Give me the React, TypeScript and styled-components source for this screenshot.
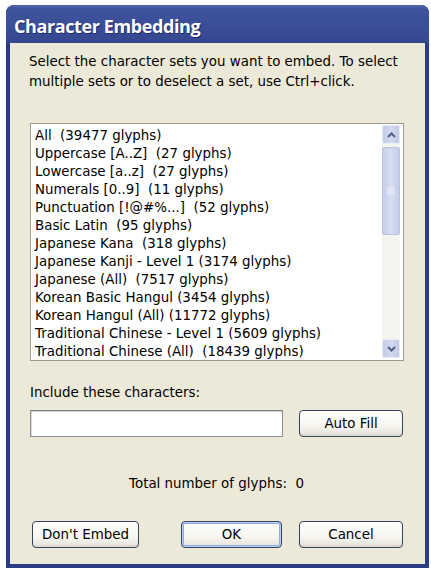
import React from "react";
import styled, { createGlobalStyle } from "styled-components";

const Global = createGlobalStyle`
  html, body { margin: 0; padding: 0; background: #ffffff; }
  * { box-sizing: border-box; }
`;

const FONT = `"DejaVu Sans", "Liberation Sans", sans-serif`;

const Window = styled.div`
  margin: 5px 0 0 6px;
  width: 423px;
  height: 563px;
  border-radius: 8px 8px 0 0;
  background: #2c3c84;
  padding: 0 4px 4px 4px;
  display: flex;
  flex-direction: column;
`;

const TitleBar = styled.div`
  height: 38px;
  margin: 0 -4px;
  border-radius: 8px 8px 0 0;
  background: linear-gradient(#5466ac 0px, #3f529c 4px, #3a4d97 60%, #34468e 100%);
  display: flex;
  align-items: center;
  padding-left: 8px;
  padding-top: 3px;
  color: #ffffff;
  font-family: "Open Sans", "DejaVu Sans", sans-serif;
  font-weight: 700;
  font-size: 18px;
  letter-spacing: -0.4px;
  text-shadow: 1px 1px 0 #1c2a66;
`;

const Body = styled.div`
  flex: 1;
  background: #ece9d8;
  padding: 9px 22px 14px 20px;
  display: flex;
  flex-direction: column;
  font-family: ${FONT};
  font-size: 13.4px;
  color: #000000;
`;

const Intro = styled.p`
  margin: 0 0 0 -1px;
  line-height: 20px;
  white-space: nowrap;
`;

const ListBox = styled.div`
  margin-top: 31px;
  width: 374px;
  height: 238px;
  border: 1px solid #9c9a94;
  background: #ffffff;
  display: flex;
  overflow: hidden;
`;

const Items = styled.ul`
  flex: 1;
  list-style: none;
  margin: 0;
  padding: 3px 0 0 4px;
  overflow: hidden;
`;

const Item = styled.li`
  line-height: 18px;
  white-space: pre;
`;

const ScrollBar = styled.div`
  width: 18px;
  margin: 1px 3px 2px 0;
  background: #f5f4ef;
  display: flex;
  flex-direction: column;
`;

const ArrowButton = styled.div`
  height: 19px;
  border-radius: 2px;
  background: linear-gradient(90deg, #c3cce6, #d3daef 50%, #c0c9e4);
  border: 1px solid #e8ecf8;
  display: flex;
  align-items: center;
  justify-content: center;
`;

const Thumb = styled.div`
  margin-top: 3px;
  height: 88px;
  border-radius: 2px;
  background: linear-gradient(90deg, #c6cfe9, #d6ddf2 50%, #c4cde8);
  border: 1px solid #b8c3e2;
  display: flex;
  align-items: center;
  justify-content: center;
`;

const Track = styled.div`
  flex: 1;
`;

const Label = styled.div`
  margin-top: 23px;
  line-height: 18px;
`;

const InputRow = styled.div`
  margin-top: 8px;
  display: flex;
  align-items: center;
  gap: 16px;
`;

const TextInput = styled.input`
  width: 253px;
  height: 27px;
  border: 1px solid #8f9099;
  border-top-color: #7a7b82;
  background: #ffffff;
  box-shadow: inset 1px 1px 0 #d9d9d9;
  font-family: ${FONT};
  font-size: 13px;
  padding: 0 4px;
  outline: none;
`;

const Button = styled.button<{ $w: number; $default?: boolean }>`
  width: ${(p) => p.$w}px;
  height: 27px;
  border: 1px solid #35435f;
  border-radius: 4px;
  background: linear-gradient(#ffffff, #f6f5f0 60%, #e4e2d8);
  box-shadow: ${(p) =>
    p.$default
      ? "inset 0 0 0 1px #b9cdf5, inset 0 0 0 2px #8fabe6"
      : "inset 0 -2px 0 #dcdad0"};
  font-family: ${FONT};
  font-size: 13.4px;
  color: #000000;
  padding: 0;
  cursor: default;
`;

const Total = styled.div`
  margin-top: 38px;
  line-height: 18px;
  text-align: center;
  white-space: pre;
`;

const ButtonRow = styled.div`
  margin-top: 28px;
  padding-left: 2px;
  display: flex;
  align-items: center;
  gap: 17px;
  & > :nth-child(2) {
    margin-left: auto;
  }
`;

const Chevron = ({ up }: { up?: boolean }) => (
  <svg width="9" height="6" viewBox="0 0 9 6">
    <path
      d={up ? "M1 5 L4.5 1.5 L8 5" : "M1 1 L4.5 4.5 L8 1"}
      fill="none"
      stroke="#4d6185"
      strokeWidth="2"
    />
  </svg>
);

const Grip = () => (
  <svg width="8" height="8" viewBox="0 0 8 8">
    {[1, 3, 5, 7].map((y) => (
      <line key={y} x1="0" x2="8" y1={y} y2={y} stroke="#eef1fb" strokeWidth="1" />
    ))}
  </svg>
);

const items = [
  "All  (39477 glyphs)",
  "Uppercase [A..Z]  (27 glyphs)",
  "Lowercase [a..z]  (27 glyphs)",
  "Numerals [0..9]  (11 glyphs)",
  "Punctuation [!@#%...]  (52 glyphs)",
  "Basic Latin  (95 glyphs)",
  "Japanese Kana  (318 glyphs)",
  "Japanese Kanji - Level 1 (3174 glyphs)",
  "Japanese (All)  (7517 glyphs)",
  "Korean Basic Hangul (3454 glyphs)",
  "Korean Hangul (All) (11772 glyphs)",
  "Traditional Chinese - Level 1 (5609 glyphs)",
  "Traditional Chinese (All)  (18439 glyphs)",
];

export default function App() {
  return (
    <>
      <Global />
      <Window>
        <TitleBar>Character Embedding</TitleBar>
        <Body>
          <Intro>
            Select the character sets you want to embed. To select
            <br />
            multiple sets or to deselect a set, use Ctrl+click.
          </Intro>
          <ListBox>
            <Items>
              {items.map((t) => (
                <Item key={t}>{t}</Item>
              ))}
            </Items>
            <ScrollBar>
              <ArrowButton>
                <Chevron up />
              </ArrowButton>
              <Thumb>
                <Grip />
              </Thumb>
              <Track />
              <ArrowButton>
                <Chevron />
              </ArrowButton>
            </ScrollBar>
          </ListBox>
          <Label>Include these characters:</Label>
          <InputRow>
            <TextInput type="text" />
            <Button $w={104}>Auto Fill</Button>
          </InputRow>
          <Total>{"Total number of glyphs:  0"}</Total>
          <ButtonRow>
            <Button $w={107}>Don't Embed</Button>
            <Button $w={101} $default>
              OK
            </Button>
            <Button $w={104}>Cancel</Button>
          </ButtonRow>
        </Body>
      </Window>
    </>
  );
}
